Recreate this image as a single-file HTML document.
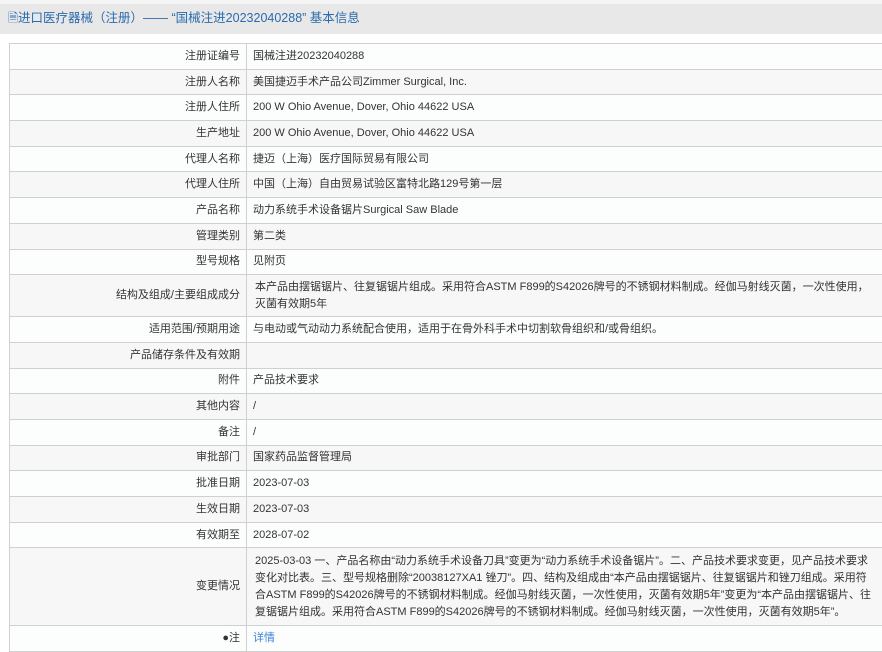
<!DOCTYPE html>
<html><head><meta charset="utf-8"><style>
*{margin:0;padding:0;box-sizing:border-box}
body{width:882px;height:641px;overflow:hidden;background:#fff;font-family:"Liberation Sans","Noto Sans CJK SC",sans-serif;font-size:11px;color:#333}
.hd{position:absolute;left:0;top:0;width:882px;height:34px;background:#e8e8e8;border-top:4px solid #f4f4f4;color:#2a6aae;font-size:12.5px;line-height:29px;padding-left:8px}
table{position:absolute;left:9px;top:43px;width:900px;border-collapse:collapse;table-layout:fixed}
td{border:1px solid #d0d0d0;height:25.7px;padding:0 6px;line-height:17px;vertical-align:middle;white-space:nowrap;overflow:hidden}
td.l{text-align:right;padding-right:6px}
tr:nth-child(odd) td{background:#fcfefe}
tr:nth-child(even) td{background:#f7f7f7}
a{color:#3b82d6;text-decoration:none}
td.v{padding:3px 35px 3px 8px;white-space:normal}
</style></head><body>
<div class="hd">🗎进口医疗器械（注册）—— “国械注进20232040288” 基本信息</div>
<table>
<colgroup><col style="width:237px"><col style="width:663px"></colgroup>
<tr><td class="l">注册证编号</td><td>国械注进20232040288</td></tr>
<tr><td class="l">注册人名称</td><td>美国捷迈手术产品公司Zimmer Surgical, Inc.</td></tr>
<tr><td class="l">注册人住所</td><td>200 W Ohio Avenue, Dover, Ohio 44622 USA</td></tr>
<tr><td class="l">生产地址</td><td>200 W Ohio Avenue, Dover, Ohio 44622 USA</td></tr>
<tr><td class="l">代理人名称</td><td>捷迈（上海）医疗国际贸易有限公司</td></tr>
<tr><td class="l">代理人住所</td><td>中国（上海）自由贸易试验区富特北路129号第一层</td></tr>
<tr><td class="l">产品名称</td><td>动力系统手术设备锯片Surgical Saw Blade</td></tr>
<tr><td class="l">管理类别</td><td>第二类</td></tr>
<tr><td class="l">型号规格</td><td>见附页</td></tr>
<tr><td class="l" style="height:42px">结构及组成/主要组成成分</td><td class="v">本产品由摆锯锯片、往复锯锯片组成。采用符合ASTM F899的S42026牌号的不锈钢材料制成。经伽马射线灭菌，一次性使用，灭菌有效期5年</td></tr>
<tr><td class="l">适用范围/预期用途</td><td>与电动或气动动力系统配合使用，适用于在骨外科手术中切割软骨组织和/或骨组织。</td></tr>
<tr><td class="l">产品储存条件及有效期</td><td></td></tr>
<tr><td class="l">附件</td><td>产品技术要求</td></tr>
<tr><td class="l">其他内容</td><td>/</td></tr>
<tr><td class="l">备注</td><td>/</td></tr>
<tr><td class="l">审批部门</td><td>国家药品监督管理局</td></tr>
<tr><td class="l">批准日期</td><td>2023-07-03</td></tr>
<tr><td class="l">生效日期</td><td>2023-07-03</td></tr>
<tr><td class="l">有效期至</td><td>2028-07-02</td></tr>
<tr><td class="l" style="height:78px">变更情况</td><td class="v">2025-03-03 一、产品名称由“动力系统手术设备刀具”变更为“动力系统手术设备锯片”。二、产品技术要求变更，见产品技术要求变化对比表。三、型号规格删除“20038127XA1 锉刀”。四、结构及组成由“本产品由摆锯锯片、往复锯锯片和锉刀组成。采用符合ASTM F899的S42026牌号的不锈钢材料制成。经伽马射线灭菌，一次性使用，灭菌有效期5年”变更为“本产品由摆锯锯片、往复锯锯片组成。采用符合ASTM F899的S42026牌号的不锈钢材料制成。经伽马射线灭菌，一次性使用，灭菌有效期5年”。</td></tr>
<tr><td class="l">●注</td><td><a>详情</a></td></tr>
</table>
</body></html>
